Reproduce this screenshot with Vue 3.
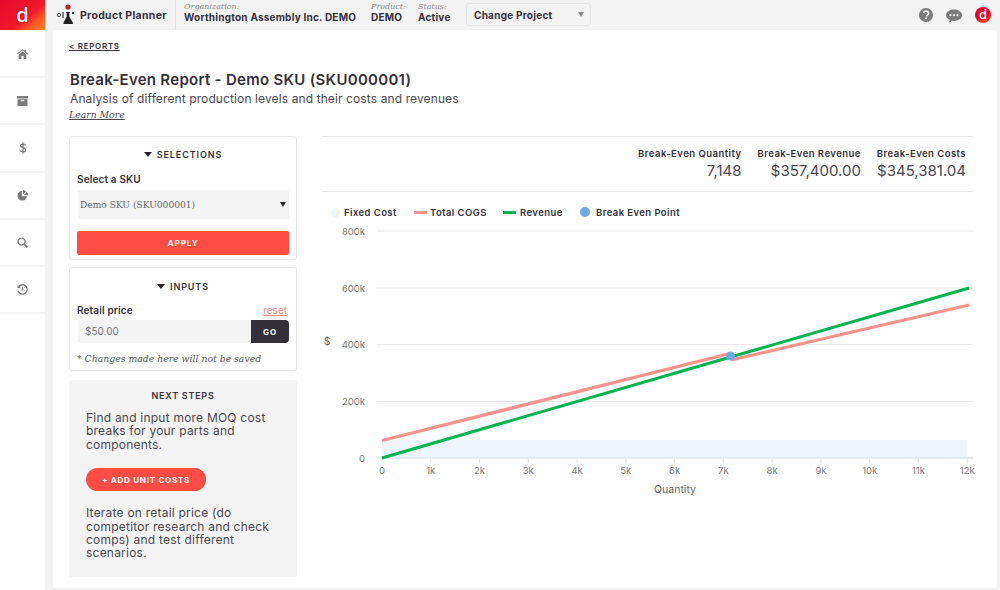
<script setup>
const xTicks = Array.from({ length: 13 }, (_, i) => ({ x: 382 + i * 48.77, label: i === 0 ? '0' : i + 'k' }))
const yTicks = [
  { y: 231, label: '800k' },
  { y: 288, label: '600k' },
  { y: 344.5, label: '400k' },
  { y: 401.5, label: '200k' },
]
const stats = [
  { label: 'Break-Even Quantity', value: '7,148' },
  { label: 'Break-Even Revenue', value: '$357,400.00' },
  { label: 'Break-Even Costs', value: '$345,381.04' },
]
</script>

<template>
  <div class="app">
    <header class="topbar">
      <div class="logo">d</div>
      <div class="brand">
        <svg class="flask" width="22" height="22" viewBox="0 0 22 22">
          <circle cx="13" cy="4" r="2.600" fill="#b3262c" />
          <path d="M11 9h4v1h-.7v3.500l3.600 6.300c.3.600 0 1.200-.7 1.200H9.100c-.7 0-1-.6-.7-1.200l3.300-6.300V10H11z" fill="#222" />
          <circle cx="4" cy="12" r="1.700" fill="none" stroke="#444" stroke-width="1" />
          <path d="M8 9v6" stroke="#444" stroke-width="1.300" />
          <rect x="17" y="9" width="2" height="2" fill="#222" />
        </svg>
        <span>Product Planner</span>
      </div>
      <div class="meta org"><em>Organization:</em><b>Worthington Assembly Inc. DEMO</b></div>
      <div class="meta prod"><em>Product:</em><b>DEMO</b></div>
      <div class="meta stat"><em>Status:</em><b>Active</b></div>
      <div class="project"><span>Change Project</span><i></i></div>
      <div class="top-icons">
        <svg width="16" height="16" viewBox="0 0 16 16">
          <circle cx="8" cy="8" r="7" fill="#7b7b7b" />
          <path d="M5.500 6.200C5.700 4.800 6.700 4.200 8 4.200c1.500 0 2.600.8 2.600 2.100 0 1.900-2.100 1.700-2.100 3.100" fill="none" stroke="#f3f3f3" stroke-width="1.700" />
          <rect x="7.200" y="10.400" width="1.900" height="1.800" fill="#f3f3f3" />
        </svg>
        <svg class="chat" width="18" height="16" viewBox="0 0 18 16">
          <path d="M9 1.500c4.400 0 8 2.500 8 5.700s-3.600 5.700-8 5.700c-.7 0-1.300-.1-1.900-.2-1 1-2.200 1.600-3.600 1.800.7-.8 1.100-1.700 1.200-2.600C2.600 10.900 1 9.200 1 7.200c0-3.200 3.600-5.700 8-5.700z" fill="#7b7b7b" />
          <circle cx="5.500" cy="7.200" r="1.100" fill="#f3f3f3" /><circle cx="9" cy="7.200" r="1.100" fill="#f3f3f3" /><circle cx="12.500" cy="7.200" r="1.100" fill="#f3f3f3" />
        </svg>
        <div class="avatar">d</div>
      </div>
    </header>

    <div class="body">
      <nav class="sidebar">
        <div class="nav-item">
          <svg width="11" height="10" viewBox="0 0 12 11"><path d="M6 0l2.300 2V.8h1.500v2.500L12 5.300l-.6.700L6 1.300.6 6 0 5.300zM1.800 6.200L6 2.500l4.200 3.700V11H7.200V7.800H4.800V11h-3z" fill="#7b7b7b" /></svg>
        </div>
        <div class="nav-item">
          <svg width="11" height="10" viewBox="0 0 11 10"><path d="M0 0h11v2.500H0zM.5 3.200h10V10H.5zM3.800 4.300v1h3.400v-1z" fill="#7b7b7b" fill-rule="evenodd" /></svg>
        </div>
        <div class="nav-item">
          <svg width="8" height="12" viewBox="0 0 8 12"><path d="M6.800 3.300C6.400 2.500 5.400 2.100 4 2.100c-1.500 0-2.500.6-2.500 1.700 0 2.500 5.200 1.200 5.200 4.200 0 1.200-1.100 1.900-2.700 1.900-1.500 0-2.600-.5-3.100-1.400M4 .3v11.400" fill="none" stroke="#7b7b7b" stroke-width="1.200" /></svg>
        </div>
        <div class="nav-item">
          <svg width="11" height="11" viewBox="0 0 12 12"><path d="M5.300 1.200v5.500h5.500A5.100 5.100 0 1 1 5.300 1.200z" fill="#7b7b7b" /><path d="M6.400 0a5.500 5.500 0 0 1 3.600 1.700L6.400 5.300z" fill="#7b7b7b" /><path d="M7.200 5.700l3.500-3.500A5.200 5.200 0 0 1 12 5.700z" fill="#7b7b7b" /></svg>
        </div>
        <div class="nav-item">
          <svg width="11" height="11" viewBox="0 0 12 12"><circle cx="5" cy="5" r="3.800" fill="none" stroke="#7b7b7b" stroke-width="1.500" /><path d="M8 8l3.300 3.300" stroke="#7b7b7b" stroke-width="1.800" /></svg>
        </div>
        <div class="nav-item">
          <svg width="11" height="11" viewBox="0 0 11 11"><path d="M1.800 2.600A4.700 4.700 0 1 1 1.100 7" fill="none" stroke="#7b7b7b" stroke-width="1.300" /><path d="M.6 .8l3.300 3.100-3.500.4z" fill="#7b7b7b" /><path d="M5.800 3v3H3.600" fill="none" stroke="#7b7b7b" stroke-width="1.100" /></svg>
        </div>
      </nav>

      <main class="main">
        <a class="back">&lt; REPORTS</a>
        <h1>Break-Even Report - Demo SKU (SKU000001)</h1>
        <p class="sub">Analysis of different production levels and their costs and revenues</p>
        <a class="learn">Learn More</a>

        <div class="content">
          <aside class="left">
            <section class="card selections">
              <h3><i class="caret"></i>SELECTIONS</h3>
              <label>Select a SKU</label>
              <div class="select"><span>Demo SKU (SKU000001)</span><i class="caret small"></i></div>
              <button class="apply">APPLY</button>
            </section>
            <section class="card inputs">
              <h3><i class="caret"></i>INPUTS</h3>
              <div class="label-row"><label>Retail price</label><a class="reset">reset</a></div>
              <div class="input-row"><div class="input">$50.00</div><button class="go">GO</button></div>
              <p class="note">* Changes made here will not be saved</p>
            </section>
            <section class="next">
              <h4>NEXT STEPS</h4>
              <p>Find and input more MOQ cost breaks for your parts and components.</p>
              <button class="add">+ ADD UNIT COSTS</button>
              <p>Iterate on retail price (do competitor research and check comps) and test different scenarios.</p>
            </section>
          </aside>

          <section class="right">
            <div class="stats">
              <div v-for="s in stats" :key="s.label" class="stat-item">
                <b>{{ s.label }}</b>
                <span>{{ s.value }}</span>
              </div>
            </div>
            <div class="legend">
              <span class="lg lg1"><i class="dot fixed"></i>Fixed Cost</span>
              <span class="lg lg2"><i class="dash cogs"></i>Total COGS</span>
              <span class="lg lg3"><i class="dash rev"></i>Revenue</span>
              <span class="lg lg4"><i class="dot be"></i>Break Even Point</span>
            </div>
            <svg class="chart" width="652" height="288" viewBox="321 222 652 288">
              <line v-for="t in yTicks" :key="t.y" x1="377" x2="973" :y1="t.y" :y2="t.y" stroke="#ebebeb" stroke-width="1" />
              <text v-for="t in yTicks" :key="t.label" x="365" :y="t.y + 3.500" text-anchor="end" class="tick">{{ t.label }}</text>
              <text x="365" y="461.500" text-anchor="end" class="tick">0</text>
              <rect x="382" y="440" width="585.500" height="18" fill="#eff6fe" />
              <line x1="377" x2="973" y1="458" y2="458" stroke="#e0e6f1" stroke-width="1.500" />
              <g v-for="t in xTicks" :key="t.label">
                <line :x1="t.x" :x2="t.x" y1="458" y2="463" stroke="#e0e6f1" />
                <text :x="t.x" y="474" text-anchor="middle" class="tick">{{ t.label }}</text>
              </g>
              <line x1="382" y1="440.500" x2="728" y2="354" stroke="#ff928c" stroke-width="3.200" />
              <line x1="731" y1="360" x2="969" y2="305" stroke="#ff928c" stroke-width="3.200" />
              <line x1="382" y1="458" x2="969" y2="288" stroke="#00b450" stroke-width="3" />
              <circle cx="730.500" cy="356" r="4.500" fill="#6eaaea" />
              <text x="675" y="492.500" text-anchor="middle" class="axis">Quantity</text>
              <text x="327" y="345" text-anchor="middle" class="axis">$</text>
            </svg>
          </section>
        </div>
      </main>
    </div>
  </div>
</template>

<style>
html, body { margin: 0; background: #f3f3f3; }
</style>

<style scoped>
.app { width: 1000px; height: 590px; overflow: hidden; display: flex; flex-direction: column; background: #f3f3f3; color: #33303a; font-family: Inter, "Liberation Sans", sans-serif; }
.topbar { height: 30px; flex: none; display: flex; align-items: stretch; }
.logo { width: 45px; background: linear-gradient(140deg, #e5092c 0%, #f01a2a 60%, #fb5a25 78%, #ff8420 100%); color: #fff; text-align: center; font: 500 20px/30px "Noto Sans", sans-serif; }
.brand { width: 131px; box-sizing: border-box; padding-left: 10px; display: flex; align-items: center; gap: 3px; border-right: 1px solid #e4e4e4; font-size: 10.500px; font-weight: 700; letter-spacing: .3px; }
.flask { margin-top: -2px; }
.meta { display: flex; flex-direction: column; padding-top: 2px; }
.meta em { font: italic 8px/10px "DejaVu Serif", serif; color: #8a8a8a; }
.meta b { font-size: 10px; line-height: 11px; font-weight: 700; letter-spacing: .22px; white-space: nowrap; }
.org { margin-left: 8px; width: 187px; }
.prod { width: 47px; }
.stat { width: 48px; }
.project { margin-top: 3px; width: 125px; height: 23px; box-sizing: border-box; border: 1px solid #e3e7e7; border-radius: 3px; display: flex; align-items: center; justify-content: space-between; padding: 0 6px 0 7px; font-size: 10px; font-weight: 700; letter-spacing: .25px; }
.project i { width: 0; height: 0; border: 3px solid transparent; border-top: 5px solid #8a8a8a; border-bottom: 0; }
.top-icons { margin-left: auto; display: flex; align-items: center; gap: 11px; padding-right: 9px; }
.chat { margin: 1px 1px 0 0; }
.avatar { width: 16px; height: 16px; border-radius: 50%; background: linear-gradient(160deg, #e5092c 55%, #fb5a25 100%); color: #fff; font: 500 13px/15px "Noto Sans", sans-serif; text-align: center; }
.body { flex: 1; display: flex; min-height: 0; }
.sidebar { width: 45px; background: #fff; flex: none; padding-top: 1px; }
.nav-item { height: 45.200px; border-bottom: 2px solid #f5f5f5; display: flex; align-items: center; justify-content: center; }
.main { margin: 0 3px 2px 8px; flex: 1; background: #fff; border-radius: 3px; box-sizing: border-box; padding: 11px 24px 0 16px; display: flex; flex-direction: column; align-items: flex-start; }
.back { font-size: 8px; line-height: 10px; font-weight: 600; letter-spacing: .7px; text-decoration: underline; }
h1 { margin: 19px 0 0 1px; font-size: 15px; line-height: 20px; font-weight: 600; letter-spacing: .28px; white-space: nowrap; }
.sub { margin: 1px 0 0 1px; font-size: 12px; line-height: 16px; letter-spacing: .11px; white-space: nowrap; color: #4a4750; }
.learn { margin: 1px 0 0; font: italic 9.300px/14px "DejaVu Serif", serif; text-decoration: underline; color: #4a4750; }
.content { margin-top: 14px; display: grid; grid-template-columns: 228px 652px; column-gap: 24px; }
.left { display: flex; flex-direction: column; }
.card { box-sizing: border-box; border: 1px solid #e5e9e9; border-radius: 3px; padding: 0 7px; }
.selections { height: 124px; }
.inputs { height: 104px; margin-top: 7px; }
.card h3 { margin: 11px 0 0; height: 13px; font-size: 9px; line-height: 13px; font-weight: 600; letter-spacing: .9px; text-align: center; display: flex; align-items: center; justify-content: center; gap: 5px; }
.caret { width: 0; height: 0; border: 4px solid transparent; border-top: 5px solid #28262c; border-bottom: 0; display: block; }
.caret.small { border-width: 3px; border-top-width: 5px; border-bottom-width: 0; }
label { display: block; font-size: 10px; line-height: 14px; font-weight: 600; letter-spacing: .15px; }
.selections label { margin-top: 11px; }
.select { margin: 4px 0 0 1px; width: 211px; height: 29px; background: #f4f4f4; border-radius: 2px; box-sizing: border-box; padding: 0 3px 0 2px; display: flex; align-items: center; justify-content: space-between; font: 9.100px "DejaVu Serif", serif; color: #666; }
button { border: 0; color: #fff; font-family: inherit; font-weight: 700; padding: 0; }
.apply { display: block; margin-top: 12px; width: 212px; height: 24px; border-radius: 2px; background: #ff4d45; font-size: 8px; letter-spacing: 1px; }
.inputs h3 { margin-top: 12px; }
.label-row { margin-top: 10px; display: flex; justify-content: space-between; align-items: center; height: 14px; }
.reset { font-size: 10px; color: #ff8a85; text-decoration: underline; margin-right: 2px; }
.input-row { margin: 3px 0 0 1px; display: flex; height: 23px; }
.input { width: 173px; background: #f4f4f4; font-size: 10px; line-height: 23px; padding-left: 7px; box-sizing: border-box; color: #777; border-radius: 2px 0 0 2px; }
.go { width: 38px; background: #333038; border-radius: 0 4px 4px 0; font-size: 8px; letter-spacing: .8px; }
.note { margin: 9px 0 0; font: italic 9.300px/13px "DejaVu Serif", serif; color: #555; white-space: nowrap; }
.next { margin-top: 9px; height: 197px; box-sizing: border-box; background: #f4f4f4; border-radius: 3px; padding: 10px 17px 0; color: #4a4750; }
.next h4 { margin: 0; font-size: 9px; line-height: 11px; font-weight: 600; letter-spacing: .75px; text-align: center; color: #33303a; }
.next p { margin: 10px 0 0; font-size: 12px; line-height: 13.400px; letter-spacing: .22px; width: 190px; }
.add { display: block; margin: 17px 0 15px; width: 120px; height: 23px; border-radius: 12px; background: #ff4d45; font-size: 8px; letter-spacing: .75px; }
.add + p { margin-top: 0; }
.right { display: flex; flex-direction: column; }
.stats { height: 56px; box-sizing: border-box; border-top: 1px solid #e5e9e9; border-bottom: 1px solid #e5e9e9; display: flex; justify-content: flex-end; gap: 16px; padding: 11px 7px 0 0; }
.stat-item { display: flex; flex-direction: column; align-items: flex-end; }
.stat-item b { font-size: 9.500px; line-height: 12px; font-weight: 600; letter-spacing: .46px; white-space: nowrap; }
.stat-item span { font-size: 15px; line-height: 20px; margin-top: 1px; color: #4a4750; }
.legend { box-sizing: border-box; height: 31px; display: flex; align-items: center; padding: 11px 0 0 10px; margin-top: -1px; font-size: 9.500px; font-weight: 600; letter-spacing: .42px; }
.lg { display: flex; align-items: center; white-space: nowrap; }
.lg1 { width: 83px; }
.lg2 { width: 89px; }
.lg3 { width: 77px; }
.dot { display: block; border-radius: 50%; flex: none; }
.dash { display: block; height: 3px; width: 13px; flex: none; }
.cogs { background: #ff928c; margin-right: 3px; }
.rev { background: #00b450; margin-right: 4px; }
.fixed { width: 9px; height: 9px; background: #eff6fe; margin-right: 4px; }
.be { width: 10px; height: 10px; background: #6eaaea; margin-right: 6px; }
.chart { display: block; overflow: visible; }
.tick { font-family: Inter, sans-serif; font-size: 9.500px; fill: #7a7a7a; }
.axis { font-family: Inter, sans-serif; font-size: 10.500px; fill: #666; }
</style>
